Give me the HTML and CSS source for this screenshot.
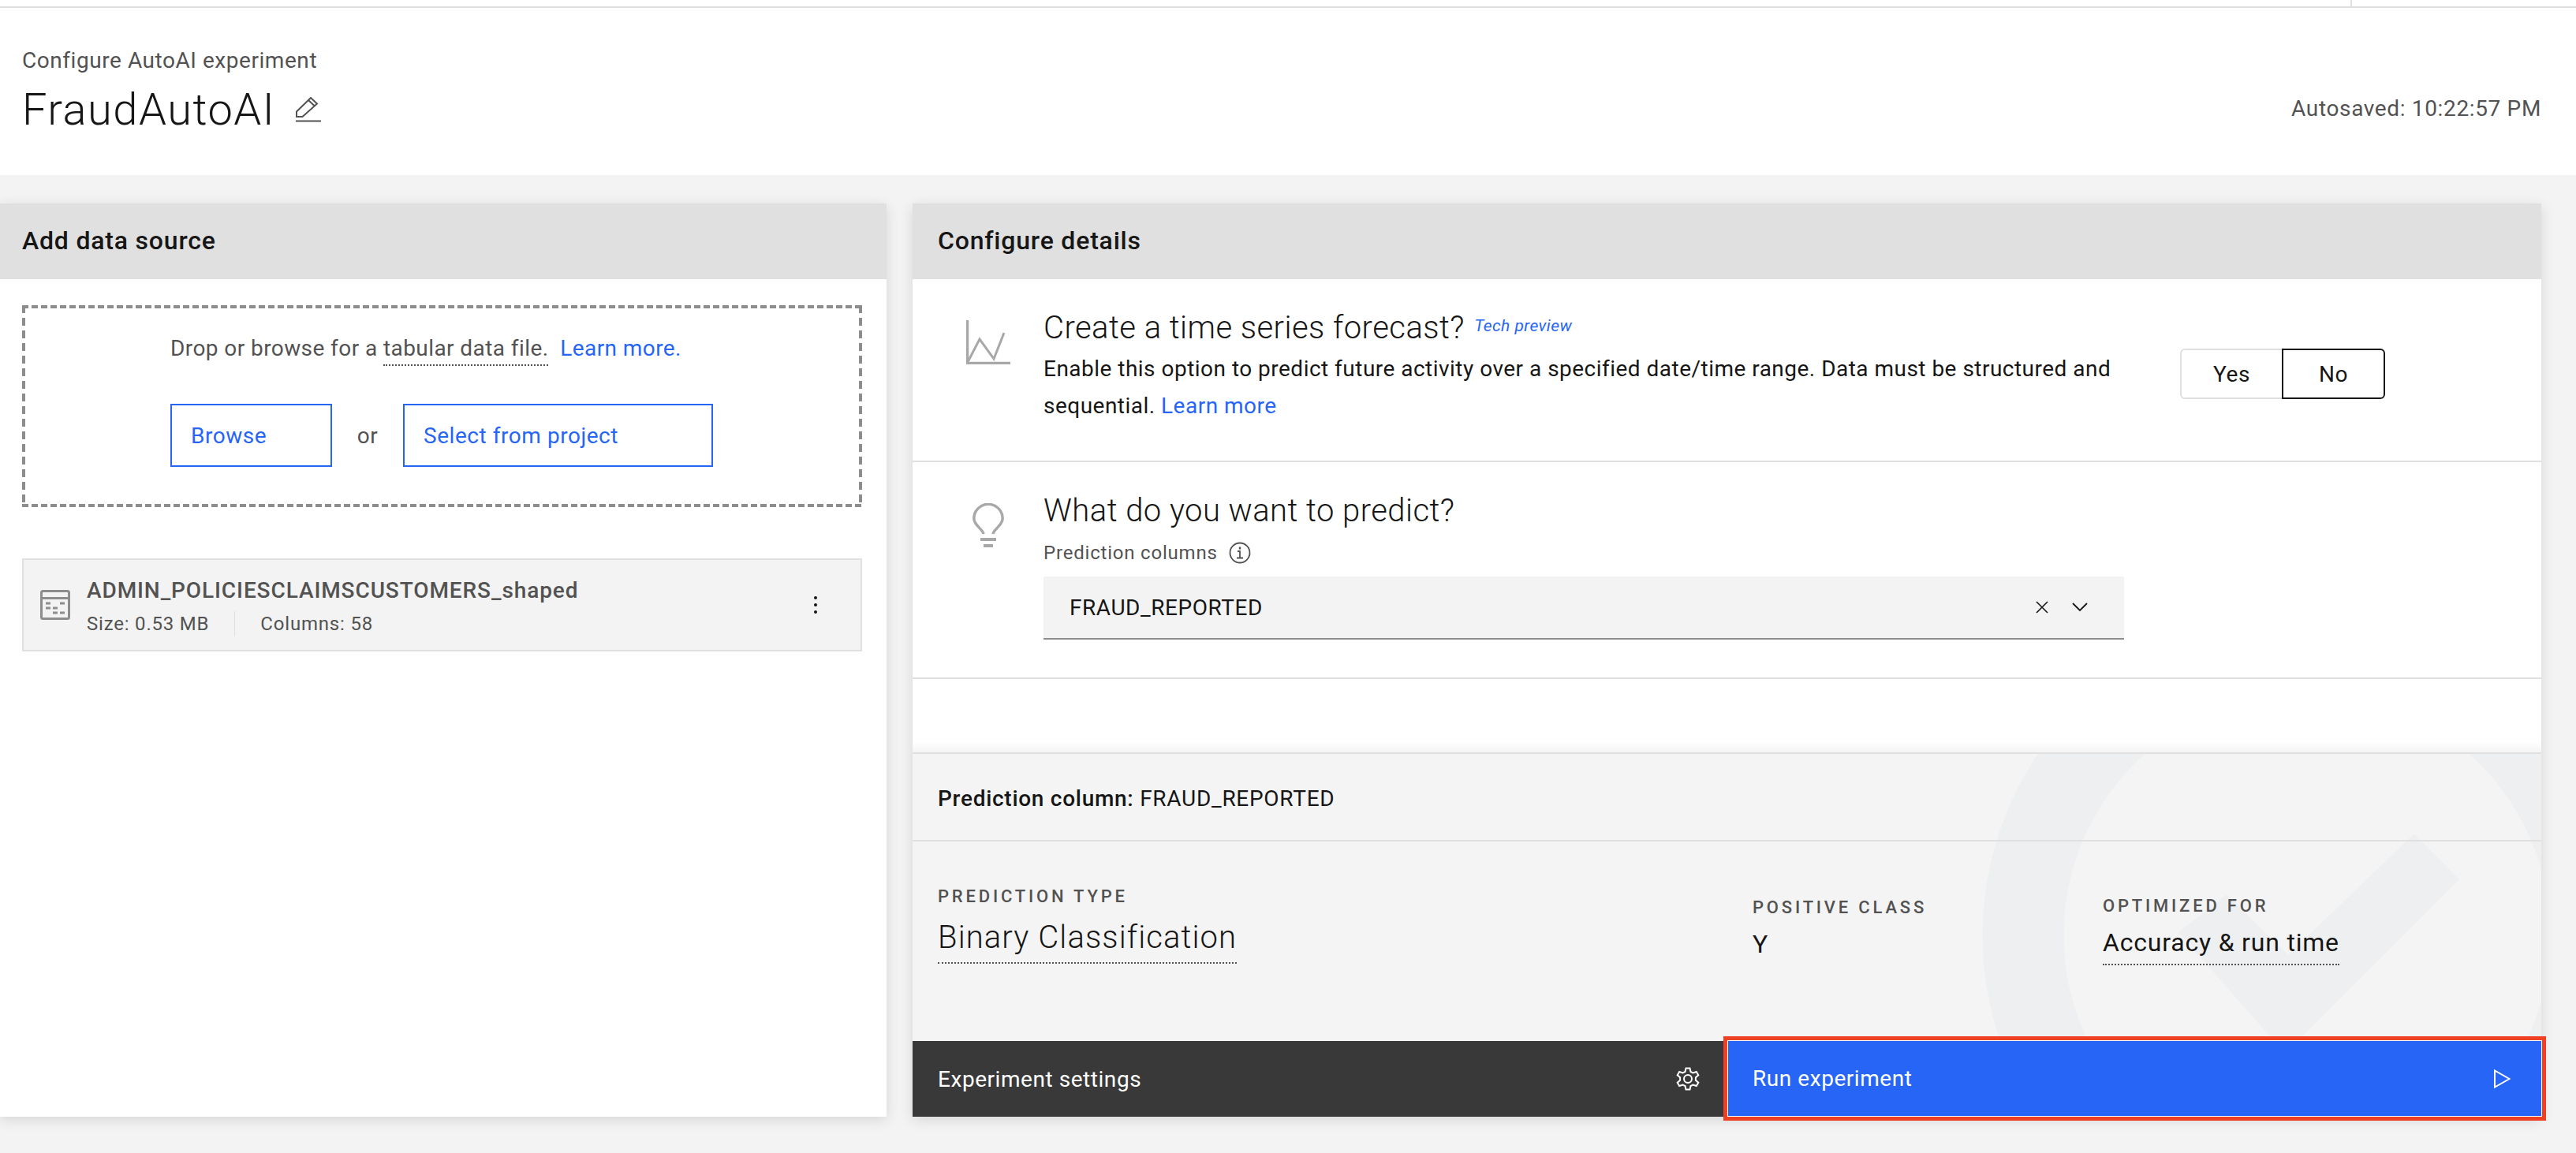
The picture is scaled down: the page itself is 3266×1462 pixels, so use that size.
FILE: index.html
```html
<!DOCTYPE html>
<html lang="en">

<head>
    <meta charset="UTF-8">
    <title>Configure AutoAI experiment</title>
    <link rel="stylesheet" href="styles.css">
</head>

<body>
    <div class="topbar">
        <div class="topbar-tick"></div>
    </div>

    <header class="page-header">
        <div>
            <div class="crumb">Configure AutoAI experiment</div>
            <h1 class="title">FraudAutoAI
                <svg class="pencil" viewBox="0 0 32 32" fill="none" stroke="#525252" stroke-width="2">
                    <path d="M0 30.500h32" />
                    <path d="M1 25v-6.500L19 1l8 7.500L8.500 25z" />
                    <path d="M16 4l8 7.500" />
                </svg>
            </h1>
        </div>
        <div class="autosaved">Autosaved: 10:22:57 PM</div>
    </header>

    <main class="columns">
        <section class="panel panel-left">
            <h2 class="panel-head">Add data source</h2>
            <div class="panel-body">
                <div class="dropzone">
                    <p class="drop-text">Drop or browse for a <span class="dotted">tabular data file.</span>&nbsp; <a class="link">Learn more.</a></p>
                    <div class="drop-actions">
                        <button class="btn-outline btn-browse">Browse</button>
                        <span class="drop-or">or</span>
                        <button class="btn-outline btn-project">Select from project</button>
                    </div>
                </div>

                <div class="file-card">
                    <svg class="file-icon" viewBox="0 0 38 38">
                        <rect x="1.500" y="1.500" width="35" height="35" rx="2" fill="none" stroke="#8d8d8d" stroke-width="3" />
                        <path d="M1 10.500h36" stroke="#8d8d8d" stroke-width="3" />
                        <path d="M7 15.500h6v3H7zM25 15.500h6v3h-6zM7 21.500h6v3H7zM16 21.500h6v3h-6zM16 27.500h6v3h-6zM25 27.500h6v3h-6z" fill="#8d8d8d" />
                    </svg>
                    <div class="file-info">
                        <div class="file-name">ADMIN_POLICIESCLAIMSCUSTOMERS_shaped</div>
                        <div class="file-meta">
                            <span class="file-size">Size: 0.53 MB</span>
                            <span class="file-cols">Columns: 58</span>
                        </div>
                    </div>
                    <svg class="file-menu" viewBox="0 0 6 24" fill="#161616">
                        <circle cx="3" cy="3" r="2" />
                        <circle cx="3" cy="12" r="2" />
                        <circle cx="3" cy="21" r="2" />
                    </svg>
                </div>
            </div>
        </section>

        <section class="panel panel-right">
            <h2 class="panel-head panel-head-right">Configure details</h2>

            <div class="option option-forecast">
                <svg class="option-icon" viewBox="0 0 56 56" fill="none" stroke="#a8a8a8">
                    <path d="M1.500 0v54.500h54.500" stroke-width="3.500" />
                    <path d="M2 53L17 24l18 25L48 16" stroke-width="3" />
                </svg>
                <div class="option-main">
                    <div class="option-title">Create a time series forecast? <em class="tech">Tech preview</em></div>
                    <p class="option-text">Enable this option to predict future activity over a specified date/time range. Data must be structured and sequential. <a class="link">Learn more</a></p>
                </div>
                <div class="toggle">
                    <span class="toggle-yes">Yes</span>
                    <span class="toggle-no">No</span>
                </div>
            </div>

            <div class="option option-predict">
                <svg class="option-icon bulb" viewBox="0 0 40 56" fill="none" stroke="#a8a8a8" stroke-width="3.500">
                    <path d="M14 39C13 33 1.800 28 1.800 19.500a18.200 18.200 0 0 1 36.400 0C38.200 28 27 33 26 39" />
                    <path d="M10 46h20M14 54h12" stroke-width="4" />
                </svg>
                <div class="option-main">
                    <div class="option-title">What do you want to predict?</div>
                    <div class="field-label">Prediction columns
                        <svg class="info" viewBox="0 0 28 28" fill="none" stroke="#525252" stroke-width="1.800">
                            <circle cx="14" cy="14" r="12.500" />
                            <path d="M10 20.500h8M14 20.500v-8.500h-3" />
                            <path d="M14 6.500v3" stroke-width="2.400" />
                        </svg>
                    </div>
                    <div class="select">
                        <span>FRAUD_REPORTED</span>
                        <svg class="select-clear" viewBox="0 0 16 16" stroke="#161616" stroke-width="1.600">
                            <path d="M1 1l14 14M15 1L1 15" />
                        </svg>
                        <svg class="select-chevron" viewBox="0 0 20 12" fill="none" stroke="#161616" stroke-width="1.800">
                            <path d="M1 1l9 9 9-9" />
                        </svg>
                    </div>
                </div>
            </div>

            <div class="spacer"></div>

            <div class="summary">
                <svg class="watermark" viewBox="0 0 2065 365" fill="none">
                    <circle cx="1768" cy="232" r="360" stroke="#eeeff1" stroke-width="103" />
                    <path d="M1666 180l78 77 160-154 57 58-221 221-135-154z" fill="#eeeff1" />
                </svg>
                <div class="summary-head"><b>Prediction column:</b> FRAUD_REPORTED</div>
                <div class="summary-grid">
                    <div class="stat stat-type">
                        <div class="stat-label">PREDICTION TYPE</div>
                        <div class="stat-big"><span class="dotted-value dotted-big">Binary Classification</span></div>
                    </div>
                    <div class="stat stat-class">
                        <div class="stat-label">POSITIVE CLASS</div>
                        <div class="stat-value">Y</div>
                    </div>
                    <div class="stat stat-opt">
                        <div class="stat-label">OPTIMIZED FOR</div>
                        <div class="stat-value"><span class="dotted-value">Accuracy &amp; run time</span></div>
                    </div>
                </div>
            </div>

            <div class="actions">
                <button class="action action-settings">Experiment settings
                    <svg class="gear" viewBox="0 0 32 32" fill="none" stroke="#fff" stroke-width="2">
                        <circle cx="16" cy="16" r="5" />
                        <path d="M13.500 2.500h5l1 4.500 3 1.500 4.300-1.500 2.500 4.300-3.400 3v3.400l3.400 3-2.500 4.300-4.300-1.500-3 1.500-1 4.500h-5l-1-4.500-3-1.500-4.300 1.500-2.500-4.300 3.400-3v-3.400l-3.400-3 2.500-4.300 4.300 1.500 3-1.500z" />
                    </svg>
                </button>
                <button class="action action-run">Run experiment
                    <svg class="play" viewBox="0 0 21 24" fill="none" stroke="#fff" stroke-width="2">
                        <path d="M1 1.500v21L19.500 12z" />
                    </svg>
                </button>
            </div>
        </section>
    </main>
</body>

</html>
```

FILE: styles.css
```css
* {
    box-sizing: border-box;
}

html,
body {
    margin: 0;
    height: 1462px;
    overflow: hidden;
}

body {
    background: #f3f3f3;
    color: #161616;
    font-family: Roboto, "Liberation Sans", sans-serif;
    font-size: 28px;
    letter-spacing: .55px;
}

h1,
h2,
p {
    margin: 0;
    font-weight: 400;
}

button {
    font: inherit;
    letter-spacing: inherit;
    cursor: pointer;
}

.link {
    color: #2665f5;
}

.topbar {
    height: 10px;
    background: #fff;
    border-bottom: 2px solid #e0e0e0;
    display: flex;
    justify-content: flex-end;
}

.topbar-tick {
    width: 2px;
    height: 8px;
    margin-right: 284px;
    background: #e0e0e0;
}

.page-header {
    height: 212px;
    padding: 48px 44px 0 28px;
    background: #fff;
    display: flex;
    justify-content: space-between;
}

.crumb {
    color: #525252;
    height: 38px;
    line-height: 38px;
}

.title {
    margin-top: 7px;
    font-size: 56px;
    line-height: 72px;
    font-weight: 300;
    letter-spacing: 1.5px;
    display: flex;
    align-items: center;
    gap: 26px;
}

.pencil {
    width: 32px;
    height: 32px;
}

.autosaved {
    margin-top: 62px;
    color: #525252;
    line-height: 36px;
    letter-spacing: .65px;
}

.columns {
    margin-top: 36px;
    height: 1158px;
    display: flex;
}

.panel {
    background: #fff;
    box-shadow: 0 4px 16px rgba(0, 0, 0, .12);
    display: flex;
    flex-direction: column;
}

.panel-left {
    width: 1124px;
}

.panel-right {
    width: 2065px;
    margin-left: 33px;
}

.panel-head {
    height: 96px;
    padding-left: 28px;
    background: #e0e0e0;
    font-size: 32px;
    font-weight: 500;
    letter-spacing: .8px;
    line-height: 94px;
}

.panel-head-right {
    padding-left: 32px;
}

.panel-body {
    padding: 33px 31px 0 28px;
}

.dropzone {
    height: 256px;
    padding-top: 33px;
    color: #525252;
    background:
        repeating-linear-gradient(to right, #8d8d8d 0 8px, transparent 8px 12px) top / 100% 4px no-repeat,
        repeating-linear-gradient(to right, #8d8d8d 0 8px, transparent 8px 12px) bottom / 100% 4px no-repeat,
        repeating-linear-gradient(to bottom, #8d8d8d 0 10px, transparent 10px 16px) left / 4px 100% no-repeat,
        repeating-linear-gradient(to bottom, #8d8d8d 0 10px, transparent 10px 16px) right / 4px 100% no-repeat;
}

.drop-text {
    padding-left: 188px;
    line-height: 44px;
    letter-spacing: .42px;
}

.dotted {
    border-bottom: 2px dotted #525252;
    padding-bottom: 4px;
}

.drop-actions {
    margin-top: 48px;
    padding-left: 188px;
    display: flex;
    align-items: center;
}

.btn-outline {
    height: 80px;
    padding: 0 0 0 24px;
    background: #fff;
    border: 2px solid #2665f5;
    color: #2665f5;
    text-align: left;
}

.btn-browse {
    width: 205px;
}

.drop-or {
    width: 90px;
    text-align: center;
}

.btn-project {
    width: 393px;
}

.file-card {
    height: 118px;
    margin-top: 65px;
    padding: 0 54px 0 21px;
    background: #f3f3f3;
    border: 2px solid #e0e0e0;
    color: #525252;
    display: flex;
    align-items: center;
}

.file-icon {
    width: 38px;
    height: 38px;
    flex: none;
}

.file-info {
    margin-left: 21px;
    flex: 1;
}

.file-name {
    font-weight: 500;
    letter-spacing: .9px;
    line-height: 42px;
}

.file-meta {
    margin-top: 5px;
    font-size: 24px;
    letter-spacing: .8px;
    line-height: 32px;
    display: flex;
}

.file-size {
    padding-right: 32px;
    border-right: 1px solid #e0e0e0;
}

.file-cols {
    padding-left: 32px;
}

.file-menu {
    width: 6px;
    height: 24px;
}

.option {
    position: relative;
    padding-left: 166px;
    border-bottom: 2px solid #e0e0e0;
    display: flex;
}

.option-forecast {
    height: 232px;
    padding-top: 38px;
}

.option-predict {
    height: 275px;
    padding-top: 38px;
}

.option-icon {
    position: absolute;
    left: 68px;
    top: 52px;
    width: 56px;
    height: 56px;
}

.bulb {
    left: 76px;
    top: 52px;
    width: 40px;
}

.option-main {
    width: 1370px;
}

.option-title {
    font-size: 40px;
    font-weight: 300;
    letter-spacing: .45px;
    line-height: 48px;
}

.tech {
    position: relative;
    top: -9px;
    margin-left: 2px;
    color: #2665f5;
    font-size: 21px;
    font-weight: 400;
}

.option-text {
    margin-top: -2px;
    line-height: 47px;
    letter-spacing: .48px;
}

.toggle {
    width: 260px;
    height: 64px;
    margin: 50px 0 0 71px;
    display: flex;
    text-align: center;
    line-height: 62px;
}

.toggle span {
    flex: 1;
    border: 2px solid #e0e0e0;
}

.toggle-yes {
    border-right: 0 !important;
    border-radius: 6px 0 0 6px;
}

.toggle-no {
    border-color: #161616 !important;
    border-radius: 0 6px 6px 0;
}

.field-label {
    margin-top: 10px;
    height: 38px;
    color: #525252;
    font-size: 24px;
    letter-spacing: .8px;
    line-height: 38px;
    display: flex;
    align-items: center;
    gap: 14px;
}

.info {
    width: 28px;
    height: 28px;
}

.select {
    height: 80px;
    margin-top: 11px;
    padding: 0 46px 0 33px;
    background: #f3f3f3;
    border-bottom: 2px solid #8d8d8d;
    display: flex;
    align-items: center;
}

.select span {
    flex: 1;
}

.select-clear {
    width: 16px;
    height: 16px;
}

.select-chevron {
    width: 20px;
    height: 12px;
    margin-left: 30px;
}

.spacer {
    height: 93px;
    background: linear-gradient(to bottom, #fff 85%, #f4f4f4);
}

.summary {
    position: relative;
    flex: 1;
    background: #f4f4f4;
    overflow: hidden;
}

.watermark {
    position: absolute;
    left: 0;
    top: 0;
    width: 2065px;
    height: 365px;
}

.summary-head {
    position: relative;
    height: 113px;
    padding-left: 32px;
    border-top: 2px solid #e0e0e0;
    border-bottom: 2px solid #e0e0e0;
    letter-spacing: .72px;
    line-height: 114px;
}

.summary-head b {
    font-weight: 500;
}

.summary-grid {
    position: relative;
    padding: 54px 0 0 32px;
    display: flex;
}

.stat-type {
    width: 1033px;
}

.stat-class {
    width: 444px;
    padding-top: 14px;
}

.stat-opt {
    padding-top: 12px;
}

.stat-label {
    color: #525252;
    font-size: 22px;
    font-weight: 500;
    letter-spacing: 3.8px;
    line-height: 32px;
}

.stat-big {
    margin-top: 10px;
    font-size: 40px;
    font-weight: 300;
    letter-spacing: 1.1px;
    line-height: 52px;
}

.stat-value {
    margin-top: 8px;
    font-size: 32px;
    letter-spacing: .8px;
    line-height: 44px;
}

.dotted-value {
    padding-bottom: 8px;
    border-bottom: 2px dotted #525252;
}

.dotted-big {
    padding-bottom: 8px;
}

.actions {
    position: relative;
    height: 96px;
    display: flex;
    color: #fff;
}

.action {
    height: 96px;
    padding: 0 32px;
    border: 0;
    color: #fff;
    display: flex;
    align-items: center;
    justify-content: space-between;
}

.action-settings {
    width: 1032px;
    background: #393939;
    padding-right: 33px;
}

.action-run {
    position: absolute;
    left: 1028px;
    top: -6px;
    width: 1043px;
    height: 107px;
    padding: 0 40px 0 32px;
    background: #2665f5;
    border: 5px solid #ef4023;
    box-shadow: inset 0 0 0 1px #fff;
}

.gear {
    width: 32px;
    height: 32px;
}

.play {
    width: 21px;
    height: 24px;
}
```
